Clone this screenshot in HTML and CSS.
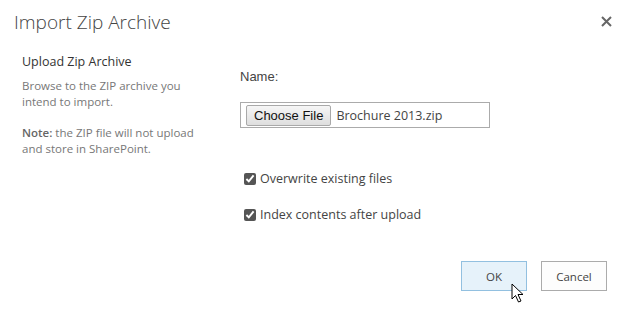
FILE: index.html
```html
<!DOCTYPE html>
<html lang="en">
<head>
  <meta charset="UTF-8">
  <title>Import Zip Archive</title>
  <link rel="stylesheet" href="styles.css">
</head>
<body>
  <div class="dialog">
    <div class="dialog-header">
      <h1 class="dialog-title">Import Zip Archive</h1>
      <span class="close-button">
        <svg width="11" height="11" viewBox="0 0 11 11"><path d="M1 1 L10 10 M10 1 L1 10" stroke="#666" stroke-width="2"/></svg>
      </span>
    </div>
    <div class="dialog-body">
      <div class="section-info">
        <h2 class="section-title">Upload Zip Archive</h2>
        <p class="section-desc">Browse to the ZIP archive you intend to import.</p>
        <p class="section-desc"><b>Note:</b> the ZIP file will not upload and store in SharePoint.</p>
      </div>
      <div class="section-fields">
        <label class="field-label">Name:</label>
        <div class="file-box">
          <span class="file-button">Choose File</span>
          <span class="file-name">Brochure 2013.zip</span>
        </div>
        <label class="check-row"><input type="checkbox" checked> Overwrite existing files</label>
        <label class="check-row"><input type="checkbox" checked> Index contents after upload</label>
      </div>
    </div>
    <div class="dialog-footer">
      <button class="btn btn-primary">OK
        <svg class="cursor" width="14" height="22" viewBox="0 0 14 22"><path d="M1 1 L1 16 L4.5 12.5 L7.5 19 L10 18 L7 11.5 L12 11.5 Z" fill="#fff" stroke="#000" stroke-width="1"/></svg>
      </button>
      <button class="btn">Cancel</button>
    </div>
  </div>
</body>
</html>
```

FILE: styles.css
```css
body {
  margin: 0;
  background-color: #fff;
  font-family: 'Open Sans', sans-serif;
  color: #444;
}

.dialog {
  width: 621px;
  height: 316px;
  box-sizing: border-box;
  padding: 9px 0 0 0;
}

.dialog-header {
  display: flex;
  justify-content: space-between;
  align-items: flex-start;
  padding: 0 9px 0 14px;
}

.dialog-title {
  margin: 0;
  font-size: 19px;
  font-weight: 300;
  color: #444;
  line-height: 26px;
}

.close-button {
  margin-top: 1px;
}

.dialog-body {
  display: flex;
  margin-top: 18px;
}

.section-info {
  width: 182px;
  padding-left: 22px;
  padding-right: 36px;
}

.section-title {
  margin: 0 0 7px 0;
  font-size: 12.5px;
  font-weight: 400;
  color: #333;
  line-height: 18px;
}

.section-desc {
  margin: 0 0 15px 0;
  font-size: 11.5px;
  color: #777;
  line-height: 16px;
}

.section-desc b {
  font-weight: 600;
  color: #666;
}

.section-fields {
  display: flex;
  flex-direction: column;
  align-items: flex-start;
  padding-top: 16px;
}

.field-label {
  font-family: 'Liberation Sans', sans-serif;
  font-size: 13px;
  color: #444;
  line-height: 15px;
}

.file-box {
  display: flex;
  align-items: center;
  width: 243px;
  height: 24px;
  margin-top: 18px;
  border: 1px solid #ababab;
  padding-left: 5px;
}

.file-button {
  font-family: 'Liberation Sans', sans-serif;
  font-size: 13px;
  color: #111;
  background: linear-gradient(#f6f6f6, #dedede);
  border: 1px solid #a9a9a9;
  border-radius: 2px;
  height: 19px;
  line-height: 19px;
  padding: 0 7px;
}

.file-name {
  margin-left: 5px;
  font-size: 12.5px;
  color: #444;
}

.check-row {
  display: flex;
  align-items: center;
  font-size: 12.5px;
  color: #444;
  margin-top: 42px;
  margin-left: 4px;
}

.check-row + .check-row {
  margin-top: 19px;
}

.check-row input {
  width: 12px;
  height: 12px;
  margin: 0 4px 0 0;
  accent-color: #555;
}

.dialog-footer {
  display: flex;
  justify-content: flex-end;
  gap: 14px;
  padding: 0 14px 0 0;
  margin-top: 38px;
}

.btn {
  position: relative;
  width: 66px;
  height: 30px;
  background-color: #fdfdfd;
  border: 1px solid #ababab;
  font-family: 'Open Sans', sans-serif;
  font-size: 11.5px;
  color: #444;
  padding: 0;
}

.btn-primary {
  background-color: #e6f2fa;
  border-color: #92c0e0;
}

.cursor {
  position: absolute;
  left: 49px;
  top: 21px;
}
```
